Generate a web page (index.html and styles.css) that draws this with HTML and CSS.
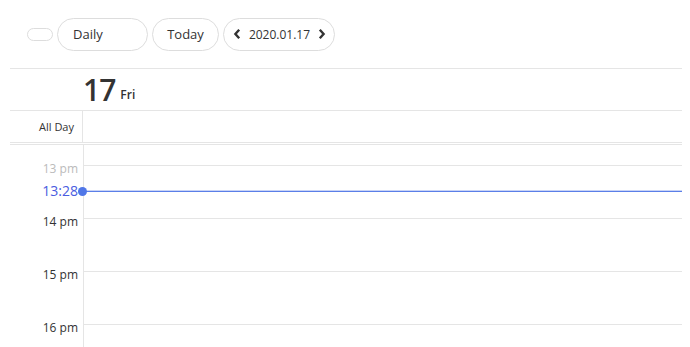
FILE: index.html
```html
<!DOCTYPE html>
<html lang="en">
<head>
    <meta charset="UTF-8">
    <meta name="viewport" content="width=device-width, initial-scale=1.0">
    <title>Daily Calendar</title>
    <link rel="stylesheet" href="styles.css">
</head>
<body>
    <div class="menu">
        <button class="btn-toggle"></button>
        <button class="btn-view">Daily</button>
        <button class="btn-today">Today</button>
        <div class="btn-nav">
            <svg width="8" height="12" viewBox="0 0 8 12"><path d="M6.2 1.8 L2.4 6 L6.2 10.2" fill="none" stroke="#333" stroke-width="2.4"/></svg>
            <span class="range">2020.01.17</span>
            <svg width="8" height="12" viewBox="0 0 8 12"><path d="M1.8 1.8 L5.6 6 L1.8 10.2" fill="none" stroke="#333" stroke-width="2.4"/></svg>
        </div>
    </div>

    <div class="calendar">
        <div class="day-head">
            <span class="day-num">17</span>
            <span class="day-name">Fri</span>
        </div>

        <div class="allday">
            <div class="gutter allday-label">All Day</div>
            <div class="allday-body"></div>
        </div>

        <div class="splitter"></div>

        <div class="timegrid">
            <div class="hour first">
                <div class="gutter"></div>
                <div class="slot"></div>
            </div>
            <div class="hour">
                <div class="gutter"><span class="hour-label past">13 pm</span></div>
                <div class="slot"></div>
            </div>
            <div class="hour">
                <div class="gutter"><span class="hour-label">14 pm</span></div>
                <div class="slot"></div>
            </div>
            <div class="hour">
                <div class="gutter"><span class="hour-label">15 pm</span></div>
                <div class="slot"></div>
            </div>
            <div class="hour">
                <div class="gutter"><span class="hour-label">16 pm</span></div>
                <div class="slot"></div>
            </div>

            <!-- current time: 13:28 -->
            <div class="now" style="top: 45px;">
                <span class="now-label">13:28</span>
                <span class="now-dot"></span>
            </div>
        </div>
    </div>
</body>
</html>
```

FILE: styles.css
```css
body {
    margin: 0;
    font-family: "Open Sans", "Noto Sans", sans-serif;
    color: #333;
    background-color: white;
    overflow: hidden;
}

.menu {
    display: flex;
    align-items: center;
    gap: 4px;
    height: 68px;
    padding-left: 27px;
    box-sizing: border-box;
}

button {
    font-family: inherit;
    color: #333;
    background-color: white;
    border: 1px solid #ddd;
    border-radius: 25px;
    cursor: pointer;
    padding: 0;
}

.btn-toggle {
    width: 26px;
    height: 13px;
}

.btn-view,
.btn-today,
.btn-nav {
    height: 33px;
    font-size: 13px;
    box-sizing: border-box;
}

.btn-view {
    width: 91px;
    text-align: left;
    padding-left: 15px;
}

.btn-today {
    width: 67px;
}

.btn-nav {
    display: flex;
    align-items: center;
    justify-content: space-between;
    width: 112px;
    padding: 0 8px 0 9px;
    border: 1px solid #ddd;
    border-radius: 25px;
}

.range {
    font-size: 12px;
}

.calendar {
    margin: 0 8px 0 10px;
    border-top: 1px solid #e5e5e5;
}

.day-head {
    height: 41px;
    padding-left: 73px;
    display: flex;
    align-items: flex-end;
    gap: 5px;
}

.day-num {
    font-size: 30px;
    line-height: 41px;
    font-weight: 600;
    letter-spacing: -1px;
}

.day-name {
    font-size: 12px;
    font-weight: 600;
    line-height: 30px;
}

.allday {
    display: flex;
    height: 31px;
    border-top: 1px solid #e5e5e5;
}

.gutter {
    width: 73px;
    flex-shrink: 0;
    border-right: 1px solid #e5e5e5;
    position: relative;
}

.allday-label {
    font-size: 11px;
    line-height: 31px;
    text-align: right;
    padding-right: 8px;
    box-sizing: border-box;
}

.allday-body {
    flex: 1;
}

.splitter {
    height: 1px;
    border-top: 1px solid #e5e5e5;
    border-bottom: 1px solid #e5e5e5;
}

.timegrid {
    position: relative;
}

.hour {
    display: flex;
    height: 53px;
}

.hour.first {
    height: 21px;
}

.slot {
    flex: 1;
    border-bottom: 1px solid #e5e5e5;
}

.hour-label {
    position: absolute;
    right: 5px;
    top: -5px;
    font-size: 12px;
    line-height: 16px;
}

.hour-label.past {
    color: #bbb;
}

.now {
    position: absolute;
    left: 73px;
    right: 0;
    height: 1px;
    border-top: 1px solid #c9d4f6;
    background-color: #5b7fe8;
}

.now-label {
    position: absolute;
    right: calc(100% + 5px);
    top: -10px;
    font-size: 14px;
    line-height: 20px;
    color: #4a5ce0;
}

.now-dot {
    position: absolute;
    left: -5px;
    top: -4px;
    width: 9px;
    height: 9px;
    border-radius: 50%;
    background-color: #5077e8;
}
```
